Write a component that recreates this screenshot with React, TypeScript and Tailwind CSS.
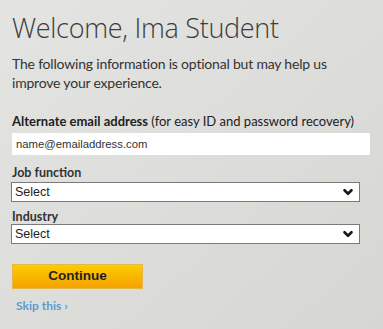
import { ChevronDown } from "lucide-react";

function SelectBox({ value }: { value: string }) {
  return (
    <div className="ml-[-1px] flex h-[20px] w-[349px] items-center justify-between border border-[#7a7a7a] bg-white pl-[3px] pr-[4px]">
      <span className="font-['Liberation_Sans',Arial,sans-serif] text-[12.5px] text-[#222]">{value}</span>
      <ChevronDown size={14} strokeWidth={4.5} className="text-[#1a1a1a]" />
    </div>
  );
}

export default function App() {
  return (
    <div className="h-[329px] w-[383px] overflow-hidden bg-gradient-to-br from-[#e4e4e2] to-[#d6d6d3] px-3 font-['Lato',sans-serif]">
      <h1 className="pt-[11px] font-['Open_Sans',sans-serif] text-[27px] font-light leading-[34px] tracking-[-0.3px] text-[#3c3c3c]">
        Welcome, Ima Student
      </h1>
      <p className="mt-[9px] text-[14px] leading-[19px] tracking-[-0.2px] text-[#333]">
        The following information is optional but may help us
        <br />
        improve your experience.
      </p>
      <div className="mt-[22px] text-[13px] leading-[15px] text-[#222]">
        <span className="font-bold">Alternate email address</span> (for easy ID and password recovery)
      </div>
      <div className="mt-[4px] flex h-[22px] w-[358px] items-center bg-white pl-[4px]">
        <span className="font-['Liberation_Sans',Arial,sans-serif] text-[11.3px] text-[#333]">name@emailaddress.com</span>
      </div>
      <div className="mt-[10px] text-[12.5px] font-bold leading-[15px] text-[#333]">Job function</div>
      <div className="mt-[2px]">
        <SelectBox value="Select" />
      </div>
      <div className="mt-[7px] text-[12.5px] font-bold leading-[15px] text-[#333]">Industry</div>
      <div>
        <SelectBox value="Select" />
      </div>
      <button className="mt-[20px] flex h-[25px] w-[131px] items-center justify-center border border-[#e6b84a] bg-gradient-to-b from-[#fccc00] to-[#f5a100] font-['Liberation_Sans',Arial,sans-serif] text-[13.5px] font-bold text-[#222]">
        Continue
      </button>
      <a className="mt-[8px] block pl-[4px] text-[12px] font-bold text-[#5b9bd5]" href="#">
        Skip this ›
      </a>
    </div>
  );
}
